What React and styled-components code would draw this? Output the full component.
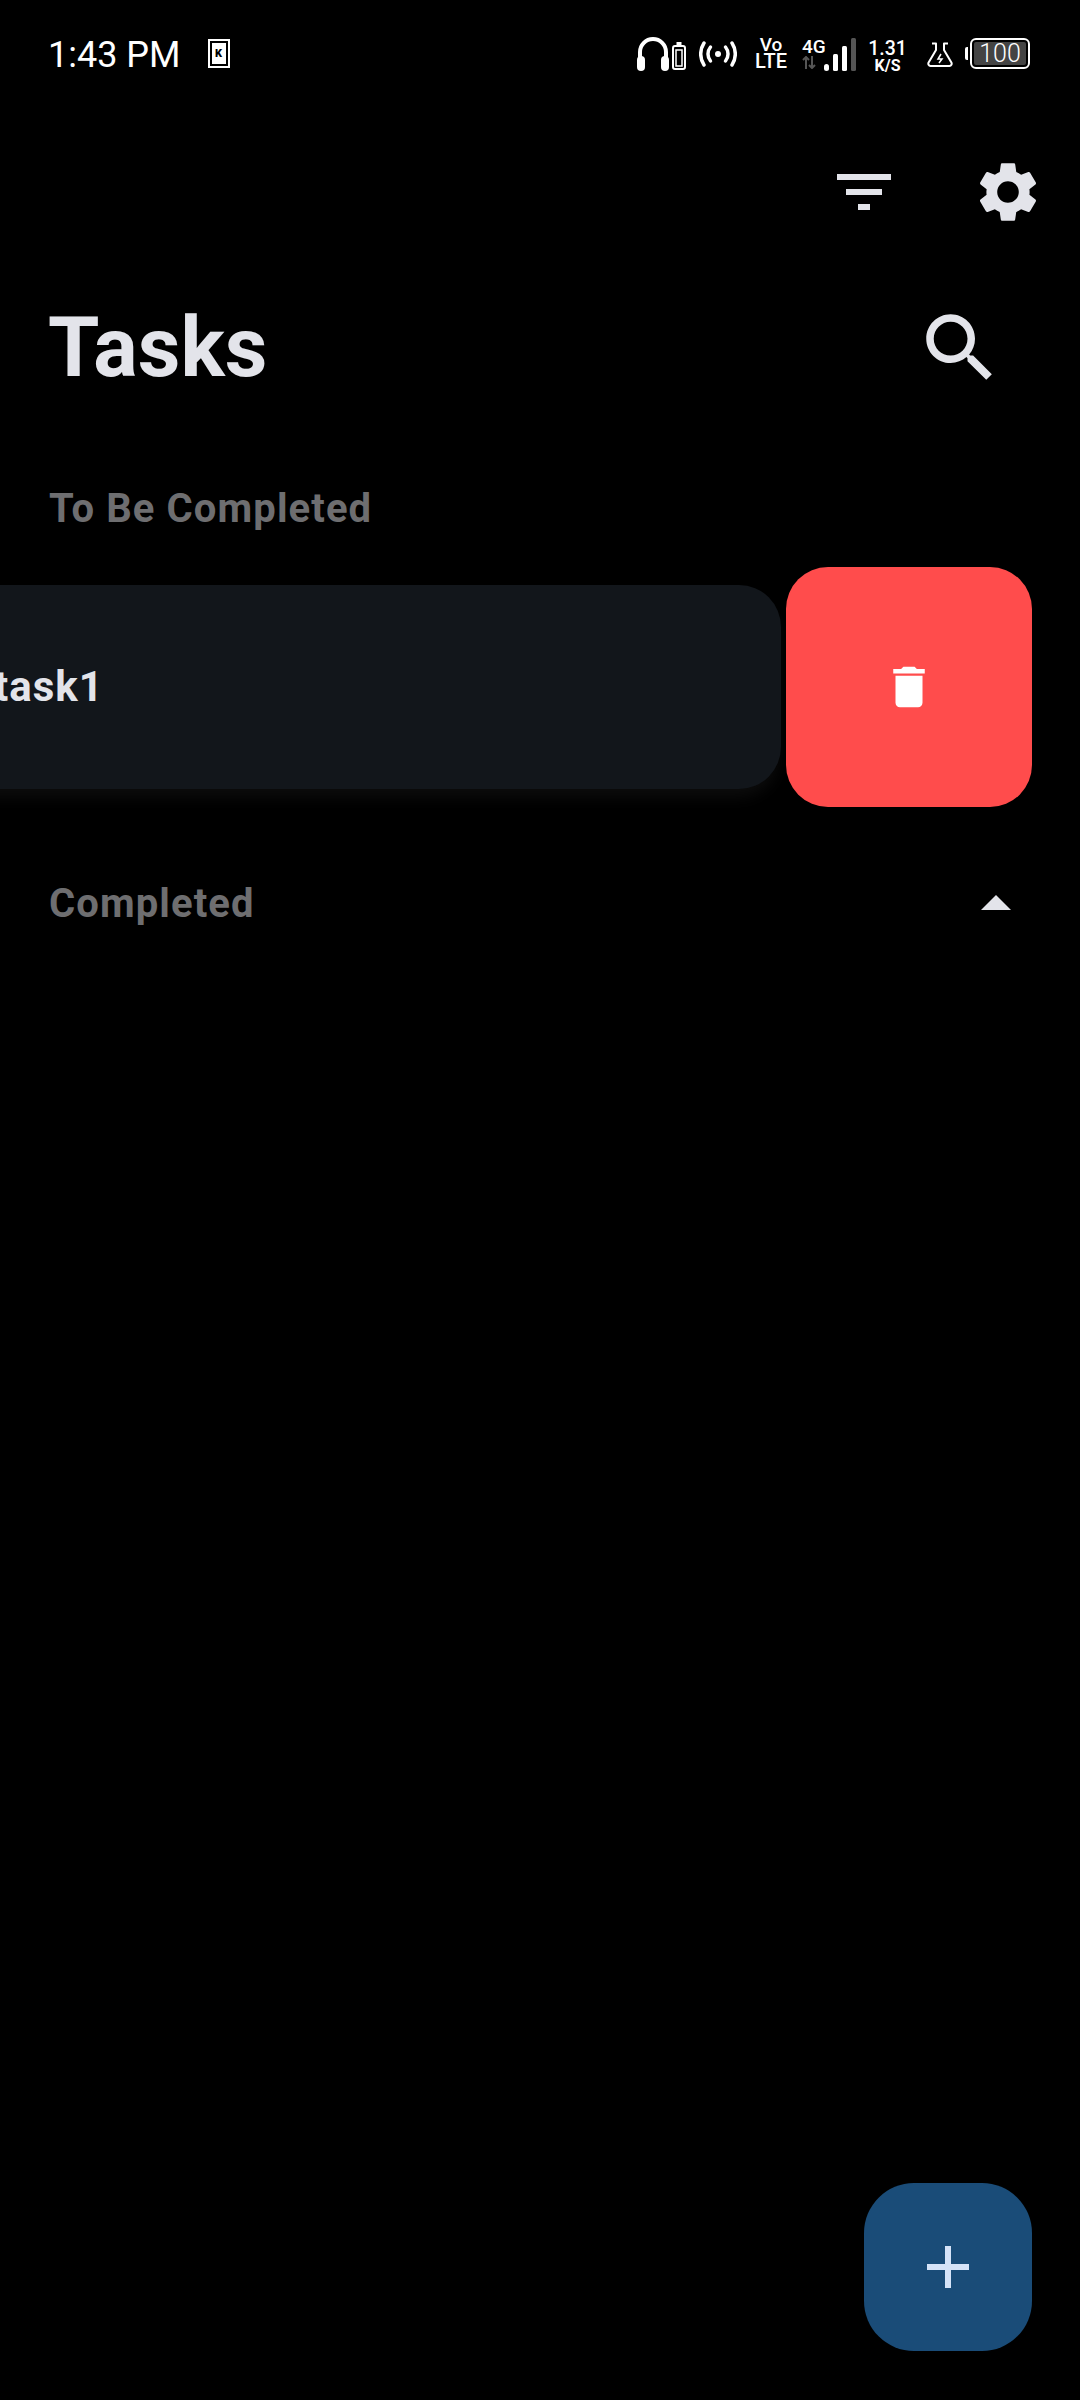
import React from 'react'
import styled, { createGlobalStyle } from 'styled-components'

const GlobalStyle = createGlobalStyle`
  html, body {
    margin: 0;
    padding: 0;
    background: #000;
  }
  body {
    font-family: Roboto, 'Liberation Sans', sans-serif;
    overflow: hidden;
  }
`

const Screen = styled.div`
  position: relative;
  width: 1080px;
  height: 2400px;
  overflow: hidden;
  background: #000;
  color: #e3e4ea;
`

const StatusBar = styled.div`
  display: flex;
  align-items: flex-start;
  height: 110px;
  padding: 0 50px 0 48px;
  color: #fff;
`

const Clock = styled.span`
  margin-top: 37px;
  font-size: 36px;
  font-weight: 400;
  line-height: 36px;
`

const SimCard = styled.span`
  display: flex;
  align-items: center;
  justify-content: center;
  box-sizing: border-box;
  width: 22px;
  height: 29px;
  margin: 39px 0 0 27px;
  border: 2px solid #fff;
  padding: 2px;

  b {
    display: flex;
    align-items: center;
    justify-content: center;
    width: 100%;
    height: 100%;
    background: #fff;
    color: #000;
    font-size: 11px;
    font-weight: 900;
  }
`

const StatusIcons = styled.div`
  display: flex;
  align-items: flex-start;
  margin-left: auto;
`

const StatusSvg = styled.svg`
  display: block;
  flex: none;
  margin-top: ${p => p.$top || 0}px;
  margin-left: ${p => p.$gap || 0}px;
`

const Stack = styled.div`
  display: flex;
  flex-direction: column;
  align-items: center;
  flex: none;
  width: ${p => p.$width}px;
  margin-top: ${p => p.$top}px;
  margin-left: ${p => p.$gap || 0}px;
`

const Tiny = styled.span`
  font-size: ${p => p.$size}px;
  font-weight: ${p => p.$weight || 500};
  line-height: ${p => p.$line}px;
  white-space: nowrap;
`

const NetworkColumn = styled.div`
  display: flex;
  flex-direction: column;
  width: 22px;
  margin-top: 38px;
  margin-left: 16px;
`

const BatteryNub = styled.span`
  width: 3px;
  height: 13px;
  margin: 47px 0 0 12px;
  background: #fff;
  border-radius: 2px 0 0 2px;
`

const Battery = styled.div`
  display: flex;
  align-items: center;
  justify-content: center;
  box-sizing: border-box;
  width: 60px;
  height: 31px;
  margin: 38px 0 0 2px;
  border: 2px solid #fff;
  border-radius: 6px;
  padding: 2px;

  span {
    display: flex;
    align-items: center;
    justify-content: center;
    width: 100%;
    height: 100%;
    background: #444;
    border-radius: 2px;
    font-size: 25px;
    font-weight: 300;
    line-height: 1;
  }
`

const Toolbar = styled.div`
  display: flex;
  justify-content: flex-end;
  gap: 72px;
  padding: 46px 36px 0 0;
`

const ToolIcon = styled.svg`
  display: block;
  width: ${p => p.$size || 72}px;
  height: ${p => p.$size || 72}px;
  fill: #e3e4ea;
`

const TitleRow = styled.div`
  display: flex;
  align-items: center;
  justify-content: space-between;
  height: 90px;
  margin-top: 75px;
  padding: 0 75px 0 48px;
`

const Title = styled.h1`
  margin: 0;
  font-size: 83px;
  font-weight: 700;
  line-height: 90px;
  color: #e3e4ea;
`

const SectionRow = styled.div`
  display: flex;
  align-items: center;
  justify-content: space-between;
  height: 50px;
  margin-top: ${p => p.$top}px;
  padding: 0 69px 0 49px;
`

const SectionLabel = styled.h2`
  margin: 0;
  font-size: 40px;
  font-weight: 700;
  line-height: 50px;
  letter-spacing: 1.1px;
  color: #6e6e70;
`

const Caret = styled.span`
  width: 0;
  height: 0;
  margin-bottom: 4px;
  border-left: 15px solid transparent;
  border-right: 15px solid transparent;
  border-bottom: 15px solid #e3e4ea;
`

const TaskRow = styled.div`
  display: flex;
  align-items: center;
  gap: 5px;
  margin-top: 33px;
  padding-right: 48px;
`

const TaskCard = styled.div`
  display: flex;
  align-items: center;
  flex: none;
  box-sizing: border-box;
  width: 841px;
  height: 204px;
  margin-left: -60px;
  padding-left: 54px;
  border-radius: 42px;
  background: #12161b;
  box-shadow: 0 12px 16px -4px rgba(255, 255, 255, 0.05);
`

const TaskName = styled.span`
  font-size: 42px;
  font-weight: 700;
  line-height: 1;
  letter-spacing: 1px;
  color: #e3e4ea;
`

const DeleteAction = styled.button`
  display: flex;
  align-items: center;
  justify-content: center;
  flex: none;
  width: 246px;
  height: 240px;
  padding: 0;
  border: 0;
  border-radius: 42px;
  background: #ff4c4c;
`

const Fab = styled.button`
  position: absolute;
  right: 48px;
  bottom: 49px;
  display: flex;
  align-items: center;
  justify-content: center;
  width: 168px;
  height: 168px;
  padding: 0;
  border: 0;
  border-radius: 50px;
  background: #1a4c78;

  &::before,
  &::after {
    content: '';
    position: absolute;
    background: #d5e3f8;
  }
  &::before {
    width: 42px;
    height: 6px;
  }
  &::after {
    width: 6px;
    height: 42px;
  }
`

export default function App() {
  return (
    <Screen>
      <GlobalStyle />
      <StatusBar>
        <Clock>1:43 PM</Clock>
        <SimCard><b>K</b></SimCard>
        <StatusIcons>
          <StatusSvg $top={37} width="32" height="34" viewBox="0 0 32 34" fill="none">
            <path d="M3 24V15a13 13 0 0 1 26 0v9" stroke="#fff" strokeWidth="4" />
            <rect x="0" y="19" width="8" height="15" rx="4" fill="#fff" />
            <rect x="24" y="19" width="8" height="15" rx="4" fill="#fff" />
          </StatusSvg>
          <StatusSvg $top={42} $gap={3} width="14" height="28" viewBox="0 0 14 28" fill="none">
            <rect x="4.5" y="0" width="5" height="3" fill="#fff" />
            <rect x="1" y="4" width="12" height="23" rx="2" stroke="#fff" strokeWidth="2" />
            <rect x="4" y="8" width="6" height="16" stroke="#fff" strokeWidth="1.5" />
          </StatusSvg>
          <StatusSvg $top={41} $gap={13} width="38" height="26" viewBox="0 0 38 26" fill="none" stroke="#fff" strokeWidth="3.5" strokeLinecap="round">
            <circle cx="19" cy="13" r="3" fill="#fff" stroke="none" />
            <path d="M11.5 6a11 11 0 0 0 0 14" />
            <path d="M26.5 6a11 11 0 0 1 0 14" />
            <path d="M5 2a20 20 0 0 0 0 22" />
            <path d="M33 2a20 20 0 0 1 0 22" />
          </StatusSvg>
          <Stack $top={37} $gap={19} $width={30}>
            <Tiny $size={19} $line={16}>Vo</Tiny>
            <Tiny $size={20} $line={17}>LTE</Tiny>
          </Stack>
          <NetworkColumn>
            <Tiny $size={19} $line={18}>4G</Tiny>
            <StatusSvg width="14" height="13" viewBox="0 0 14 13" fill="none" stroke="#555" strokeWidth="2">
              <path d="M4 13V1M1 4l3-3 3 3" />
              <path d="M10 0v12M7 9l3 3 3-3" />
            </StatusSvg>
          </NetworkColumn>
          <StatusSvg $top={38} width="32" height="33" viewBox="0 0 32 33">
            <rect x="0" y="26" width="5" height="7" rx="2.5" fill="#fff" />
            <rect x="9" y="16" width="5" height="17" rx="1.5" fill="#fff" />
            <rect x="18" y="8" width="5" height="25" rx="1.5" fill="#fff" />
            <rect x="27" y="0" width="5" height="33" rx="1.5" fill="#555" />
          </StatusSvg>
          <Stack $top={39} $gap={14} $width={35}>
            <Tiny $size={19.5} $line={19}>1.31</Tiny>
            <Tiny $size={16} $line={15} $weight={700}>K/S</Tiny>
          </Stack>
          <StatusSvg $top={42} $gap={22} width="26" height="25" viewBox="0 0 26 25" fill="none" stroke="#fff" strokeWidth="2">
            <path d="M5 1.5h4v6.5L1.6 20.5C.8 22 1.8 24 3.5 24h19c1.7 0 2.7-2 1.9-3.5L17 8V1.5h4" strokeLinejoin="round" />
            <path d="M14 12l-3 5h4l-3 4" strokeWidth="1.5" />
          </StatusSvg>
          <BatteryNub />
          <Battery><span>100</span></Battery>
        </StatusIcons>
      </StatusBar>

      <Toolbar>
        <ToolIcon viewBox="0 0 24 24">
          <path d="M10 18h4v-2h-4v2zM3 6v2h18V6H3zm3 7h12v-2H6v2z" />
        </ToolIcon>
        <ToolIcon viewBox="0 0 24 24">
          <path d="M19.14 12.94c.04-.3.06-.61.06-.94 0-.32-.02-.64-.07-.94l2.03-1.58c.18-.14.23-.41.12-.61l-1.92-3.32c-.12-.22-.37-.29-.59-.22l-2.39.96c-.5-.38-1.03-.7-1.62-.94l-.36-2.54c-.04-.24-.24-.41-.48-.41h-3.84c-.24 0-.43.17-.47.41l-.36 2.54c-.59.24-1.13.57-1.62.94l-2.39-.96c-.22-.08-.47 0-.59.22L2.74 8.87c-.12.21-.08.47.12.61l2.03 1.58c-.05.3-.09.63-.09.94s.02.64.07.94l-2.03 1.58c-.18.14-.23.41-.12.61l1.92 3.32c.12.22.37.29.59.22l2.39-.96c.5.38 1.03.7 1.62.94l.36 2.54c.05.24.24.41.48.41h3.84c.24 0 .44-.17.47-.41l.36-2.54c.59-.24 1.13-.56 1.62-.94l2.39.96c.22.08.47 0 .59-.22l1.92-3.32c.12-.22.07-.47-.12-.61l-2.01-1.58zM12 15.6c-1.98 0-3.6-1.62-3.6-3.6s1.62-3.6 3.6-3.6 3.6 1.62 3.6 3.6-1.62 3.6-3.6 3.6z" />
        </ToolIcon>
      </Toolbar>

      <TitleRow>
        <Title>Tasks</Title>
        <ToolIcon $size={90} viewBox="0 0 24 24">
          <path d="M15.5 14h-.79l-.28-.27C15.41 12.59 16 11.11 16 9.5 16 5.91 13.09 3 9.5 3S3 5.91 3 9.5 5.91 16 9.5 16c1.61 0 3.09-.59 4.23-1.57l.27.28v.79l5 4.99L20.49 19l-4.99-5zm-6 0C7.01 14 5 11.99 5 9.5S7.01 5 9.5 5 14 7.01 14 9.5 11.99 14 9.5 14z" />
        </ToolIcon>
      </TitleRow>

      <SectionRow $top={91}>
        <SectionLabel>To Be Completed</SectionLabel>
      </SectionRow>

      <TaskRow>
        <TaskCard>
          <TaskName>task1</TaskName>
        </TaskCard>
        <DeleteAction aria-label="Delete">
          <svg width="54" height="54" viewBox="0 0 24 24" fill="#fff">
            <path d="M6 19c0 1.1.9 2 2 2h8c1.1 0 2-.9 2-2V7H6v12zM19 4h-3.5l-1-1h-5l-1 1H5v2h14V4z" />
          </svg>
        </DeleteAction>
      </TaskRow>

      <SectionRow $top={72}>
        <SectionLabel>Completed</SectionLabel>
        <Caret />
      </SectionRow>

      <Fab aria-label="Add task" />
    </Screen>
  )
}
